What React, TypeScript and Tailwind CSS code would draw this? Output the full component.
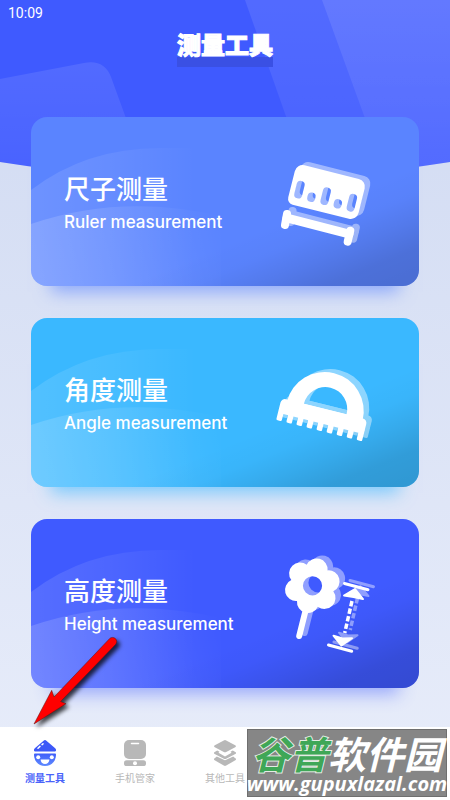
import type { ReactNode } from "react";

function RulerShape() {
  return (
    <>
      <path
        transform="translate(56.7 46) rotate(14)"
        fillRule="evenodd"
        d="M-28-20.5h56a8 8 0 0 1 8 8v25a8 8 0 0 1-8 8h-58a6 6 0 0 1-6-6v-27a8 8 0 0 1 8-8z
          M-31-.7a4 4 0 0 1 8 0v10a4 4 0 0 1-8 0z
          M-17.6 8a4 4 0 0 1 8 0v1.500a4 4 0 0 1-8 0z
          M-4-.7a4 4 0 0 1 8 0v10a4 4 0 0 1-8 0z
          M9.600 8a4 4 0 0 1 8 0v1.500a4 4 0 0 1-8 0z
          M23-.7a4 4 0 0 1 8 0v10a4 4 0 0 1-8 0z"
      />
      <g fill="none" stroke="#fff" strokeWidth="8" strokeLinecap="round">
        <path d="M17 72 79 88" strokeWidth="9" />
        <path d="M17 68 15 79" />
        <path d="M80.3 84.7 77.7 95.7" />
      </g>
    </>
  );
}

const teeth = [0, 1, 2, 3, 4, 5, 6, 7, 8];

function ProtractorShape() {
  return (
    <g transform="translate(55 63) rotate(14)">
      <path fillRule="evenodd" d="M-39 1a39 39 0 0 1 78 0zM-22-1h44a21.5 21.5 0 0 0-44 0z" />
      <rect x="-45" y="-1" width="88.4" height="15" rx="4.500" />
      {teeth.map((n) => (
        <rect key={n} x={-45 + n * 10.35} y="9" width="5.600" height="12.500" rx="1.500" />
      ))}
    </g>
  );
}

function FlowerShape() {
  return (
    <>
      <path
        fillRule="evenodd"
        d="M36.7 16.7A11 11 0 0 1 57.6 22.4A11 11 0 0 1 63.3 43.3A11 11 0 0 1 47.9 58.7A11 11 0 0 1 27 53A11 11 0 0 1 21.3 32.1A11 11 0 0 1 36.7 16.7Z
          M42.5 28.200a9.600 9.600 0 1 0 0 19.200a9.600 9.600 0 1 0 0-19.200z"
      />
      <path d="M36.7 58 29.200 88" stroke="#fff" strokeWidth="6" strokeLinecap="round" />
      <g stroke="#fff" strokeWidth="3" strokeLinecap="round">
        <path d="M74.5 35.5 98 41.7" />
        <path d="M58.5 97 81.7 103.3" />
      </g>
      <path d="M82 53 74.7 85" stroke="#fff" strokeWidth="3.500" strokeDasharray="5.500 2.200" />
      <path
        d="M85 41 93 51 83.5 49 74 47.5ZM71.5 97.5 63.5 87.7 72.5 90.5 82 90.3Z"
        stroke="#fff"
        strokeWidth="2"
        strokeLinejoin="round"
      />
    </>
  );
}

const tools = [
  {
    title: "尺子测量",
    subtitle: "Ruler measurement",
    style: "bg-[#5a84ff] shadow-[0_26px_16px_-20px_rgba(90,132,255,0.6)]",
    shape: <RulerShape />,
  },
  {
    title: "角度测量",
    subtitle: "Angle measurement",
    style: "bg-[#3ab8ff] shadow-[0_26px_16px_-20px_rgba(58,184,255,0.6)]",
    shape: <ProtractorShape />,
  },
  {
    title: "高度测量",
    subtitle: "Height measurement",
    style: "bg-[#3f5aff] shadow-[0_26px_16px_-20px_rgba(63,90,255,0.45)]",
    shape: <FlowerShape />,
  },
];

function HatIcon() {
  return (
    <svg viewBox="0 0 22 26" className="w-[22px] h-[26px]" aria-hidden="true">
      <defs>
        <linearGradient id="hat" x1="0" y1="0" x2="0" y2="1">
          <stop offset="0" stopColor="#3f5efa" />
          <stop offset="1" stopColor="#5f8aff" />
        </linearGradient>
      </defs>
      <path fill="#3d58f8" d="M9.600.7a2 2 0 0 1 2.800 0l8.800 7.600c1.400 1.300 1 3.200-.7 3.200h-19C-.2 11.500-.6 9.600.8 8.300z" />
      <path fill="url(#hat)" d="M1.200 13.500h19.600c.8 0 1.200.5 1.200 1.200 0 6.500-4.600 11.300-11 11.300S0 21.200 0 14.700c0-.7.4-1.200 1.200-1.200z" />
      <path stroke="#fff" strokeWidth="1.500" strokeLinecap="round" d="M4 8.200 6 6.400M8 4.600 9 3.800" />
      <circle cx="4.200" cy="17.300" r="2" fill="#fff" />
      <circle cx="17.800" cy="17.300" r="2" fill="#fff" />
      <path fill="#fff" d="M6.600 19.600h8.800a4.400 4.400 0 0 1-8.800 0z" />
    </svg>
  );
}

function PhoneIcon() {
  return (
    <svg viewBox="0 0 22 26" className="w-[22px] h-[26px]" fill="#b8b8b8" aria-hidden="true">
      <rect width="22" height="19" rx="5" />
      <rect y="20.300" width="22" height="5.700" rx="2.600" />
      <path stroke="#fff" strokeWidth="1.500" strokeLinecap="round" d="M7.500 3.500h7" />
      <circle cx="11" cy="23.200" r="2" fill="#fff" />
    </svg>
  );
}

function LayersIcon() {
  return (
    <svg viewBox="0 0 22 26" className="w-[22px] h-[26px]" fill="#b8b8b8" aria-hidden="true">
      <path d="M9.800.4a2.500 2.500 0 0 1 2.400 0l9 4.800c1 .6 1 1.400 0 2l-9 4.700a2.500 2.500 0 0 1-2.400 0l-9-4.700c-1-.6-1-1.400 0-2z" />
      <path d="M3.200 10.500 5.500 11.700 4.500 12.800 11 16.400 17.500 12.800 16.500 11.700 18.800 10.500 21.300 12c1 .6 1 1.400 0 2L12.200 18.700a2.500 2.500 0 0 1-2.400 0L.7 14c-1-.6-1-1.400 0-2z" />
      <path d="M2.800 16.600 9.800 19.800a2.500 2.500 0 0 0 2.400 0L19.200 16.600 21.300 18.300c1 .6 1 1.400 0 2L12.200 25.600a2.500 2.500 0 0 1-2.400 0L.7 20.300c-1-.6-1-1.400 0-2z" />
    </svg>
  );
}

const tabs: { name: string; icon: ReactNode; active?: boolean }[] = [
  { name: "测量工具", icon: <HatIcon />, active: true },
  { name: "手机管家", icon: <PhoneIcon /> },
  { name: "其他工具", icon: <LayersIcon /> },
];

function HeaderBackground() {
  return (
    <svg
      viewBox="0 0 450 176"
      preserveAspectRatio="none"
      className="absolute inset-x-0 top-0 w-full h-[176px]"
      aria-hidden="true"
    >
      <defs>
        <clipPath id="curve">
          <path d="M0 0H450V162Q225 198 0 162Z" />
        </clipPath>
        <linearGradient id="fade" x1="0" y1="0" x2="0" y2="1">
          <stop offset="0" stopColor="#fff" stopOpacity="0.1" />
          <stop offset="1" stopColor="#fff" stopOpacity="0.05" />
        </linearGradient>
      </defs>
      <g clipPath="url(#curve)">
        <path fill="#3f5aff" d="M0 0H450V176H0Z" />
        <path fill="url(#fade)" d="M0 79 84 63Q104 59 111 77L147 176H0Z" />
        <path fill="url(#fade)" d="M245 0H450V176H307Z" />
        <path fill="url(#fade)" d="M322 0H450V176H386Z" />
      </g>
    </svg>
  );
}

function CardBackground({ id }: { id: string }) {
  return (
    <svg
      viewBox="0 0 388 169"
      preserveAspectRatio="none"
      className="absolute inset-0 w-full h-full rounded-2xl"
      aria-hidden="true"
    >
      <defs>
        <linearGradient id={`${id}-outer`} x1="0" y1="0" x2="165" y2="0" gradientUnits="userSpaceOnUse">
          <stop offset="0" stopColor="#fff" stopOpacity="0.12" />
          <stop offset="0.5" stopColor="#fff" stopOpacity="0.07" />
          <stop offset="1" stopColor="#fff" stopOpacity="0" />
        </linearGradient>
        <linearGradient id={`${id}-inner`} x1="0" y1="150" x2="190" y2="100" gradientUnits="userSpaceOnUse">
          <stop offset="0" stopColor="#fff" stopOpacity="0.17" />
          <stop offset="1" stopColor="#fff" stopOpacity="0" />
        </linearGradient>
        <linearGradient id={`${id}-dark`} x1="264" y1="98" x2="303" y2="193" gradientUnits="userSpaceOnUse">
          <stop offset="0" stopOpacity="0" />
          <stop offset="0.25" stopOpacity="0.02" />
          <stop offset="0.5" stopOpacity="0.08" />
          <stop offset="0.75" stopOpacity="0.15" />
          <stop offset="1" stopOpacity="0.17" />
        </linearGradient>
      </defs>
      <path fill={`url(#${id}-outer)`} d="M0 73Q55 31 129 31H180V169H0Z" />
      <path fill={`url(#${id}-inner)`} d="M0 107Q90 76 190 99V169H0Z" />
      <path fill={`url(#${id}-dark)`} d="M0 0H388V169H0Z" />
    </svg>
  );
}

function Watermark() {
  return (
    <div className="absolute right-[3px] bottom-[3px] w-[200px] h-[68px] flex flex-col items-center bg-[#868686] border border-[#6f6f6f] italic font-bold text-white whitespace-nowrap">
      <p className="font-['Noto_Sans_CJK_SC',sans-serif] text-[38px] leading-[46px]">
        <span className="text-[#3fa757] [-webkit-text-stroke:2px_#e4ece4] [paint-order:stroke_fill]">谷普</span>
        软件园
      </p>
      <p className="font-['Open_Sans',sans-serif] text-[20px] leading-[16px]">www.gupuxlazal.com</p>
    </div>
  );
}

function Arrow() {
  return (
    <svg
      viewBox="0 0 96 100"
      className="absolute left-[28px] bottom-[66px] w-[96px] h-[100px] drop-shadow-[3px_3px_2px_rgba(0,0,0,0.75)]"
      aria-hidden="true"
    >
      <path
        fill="#f00"
        stroke="#5a1010"
        strokeWidth="0.5"
        d="M6 90 23.700 56.300 26 63 81.500 4.700A4 4 0 0 1 87.500 10.500L32.600 67.500 38 69.700Z"
      />
    </svg>
  );
}

export default function App() {
  return (
    <div className="relative min-h-screen flex flex-col bg-linear-to-b from-[#d0daf2] to-[#e8edfa] font-['Noto_Sans_CJK_SC',sans-serif]">
      <HeaderBackground />

      <header className="relative h-[117px] text-white">
        <div className="h-[26px] px-2 font-['Roboto',sans-serif] text-sm leading-[26px]">10:09</div>
        <div className="flex justify-center pt-1">
          <h1 className="relative text-2xl leading-[28px] font-black pb-2 [-webkit-text-stroke:1px_#fff]">
            <span className="absolute inset-x-0 bottom-[-1px] h-[10px] bg-[#3a50e4]" />
            <span className="relative">测量工具</span>
          </h1>
        </div>
      </header>

      <main className="relative flex flex-col gap-8 px-[31px] pb-[39px]">
        {tools.map((tool, i) => (
          <button
            key={tool.title}
            type="button"
            className={`relative h-[169px] flex items-center justify-between rounded-2xl pl-[33px] pr-[29px] text-left text-white ${tool.style}`}
          >
            <CardBackground id={`card-${i}`} />
            <span className="relative">
              <span className="block text-[26px] leading-[36px] font-medium mb-1">{tool.title}</span>
              <span className="block font-['Inter',sans-serif] text-[17px] leading-[24px] font-medium">{tool.subtitle}</span>
            </span>
            <svg
              viewBox="0 0 120 111"
              fill="#fff"
              className="relative w-[120px] h-[111px] shrink-0"
              aria-hidden="true"
            >
              <g opacity="0.42" transform="translate(5.5 -3)">
                {tool.shape}
              </g>
              {tool.shape}
            </svg>
          </button>
        ))}
      </main>

      <nav className="relative mt-auto h-[73px] grid grid-cols-5 bg-white">
        {tabs.map((tab) => (
          <a key={tab.name} href="#" className="flex flex-col items-center gap-1 pt-[13px]">
            {tab.icon}
            <span
              className={
                tab.active
                  ? "text-[10px] leading-[16px] font-bold text-[#4a63fa]"
                  : "text-[10px] leading-[16px] text-[#b8b8b8]"
              }
            >
              {tab.name}
            </span>
          </a>
        ))}
      </nav>

      <Arrow />
      <Watermark />
    </div>
  );
}
